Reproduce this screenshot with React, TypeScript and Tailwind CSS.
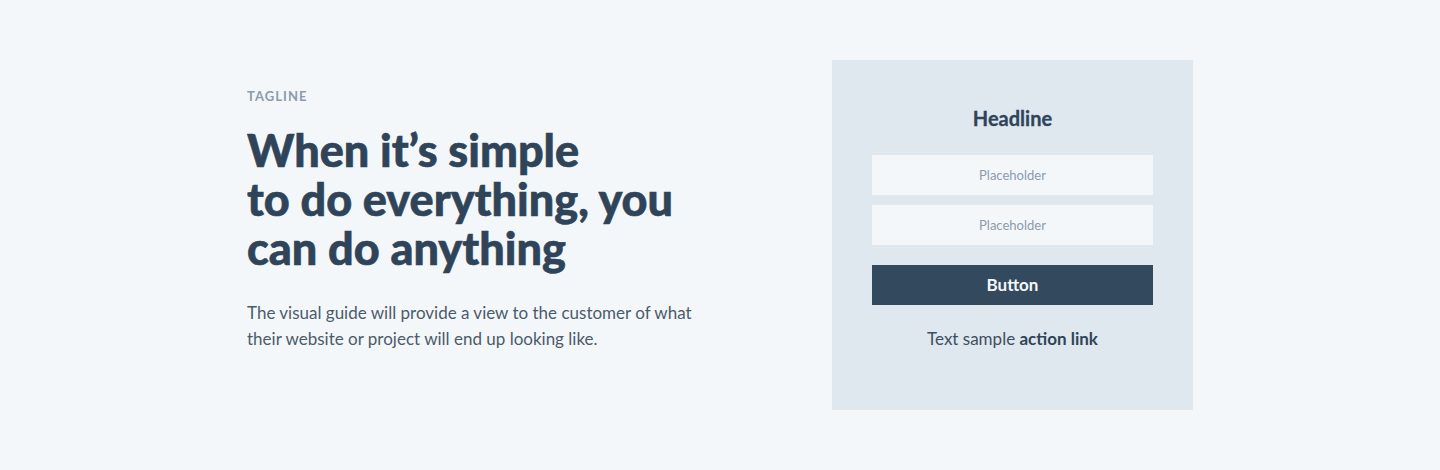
export default function App() {
  return (
    <div className="min-h-[470px] w-full bg-[#f4f7fa] font-['Lato',sans-serif]">
      <div className="mx-auto flex w-[946px] justify-between py-[60px]">
        <div className="flex w-[460px] flex-col pt-[28px]">
          <p className="text-[13px] font-bold uppercase leading-[16px] tracking-[0.08em] text-[#8a9bad]">
            Tagline
          </p>
          <h1 className="mt-[22px] text-[45px] font-black leading-[49px] text-[#2f4459] [-webkit-text-stroke:0.6px_#2f4459]">
            When it’s simple
            <br />
            to do everything, you
            <br />
            can do anything
          </h1>
          <p className="mt-[27px] w-[452px] text-[17px] leading-[26px] text-[#4b5b6b]">
            The visual guide will provide a view to the customer of what
            their website or project will end up looking like.
          </p>
        </div>
        <div className="flex h-[350px] w-[361px] flex-col bg-[#dfe7ef] px-[40px] pt-[44px]">
          <h2 className="text-center text-[20px] font-bold leading-[28px] text-[#2f4459] [-webkit-text-stroke:0.3px_#2f4459]">
            Headline
          </h2>
          <input
            className="mt-[23px] h-[40px] w-full bg-[#f4f7fa] text-center text-[13px] text-[#2f4459] outline-none placeholder:text-[#8a9bad]"
            placeholder="Placeholder"
          />
          <input
            className="mt-[10px] h-[40px] w-full bg-[#f4f7fa] text-center text-[13px] text-[#2f4459] outline-none placeholder:text-[#8a9bad]"
            placeholder="Placeholder"
          />
          <button className="mt-[20px] h-[40px] w-full bg-[#334a5e] text-[17px] font-bold text-[#f4f7fa]">
            Button
          </button>
          <p className="mt-[22px] text-center text-[17px] leading-[24px] text-[#3d4f61]">
            Text sample <span className="font-bold text-[#2f4459]">action link</span>
          </p>
        </div>
      </div>
    </div>
  );
}
